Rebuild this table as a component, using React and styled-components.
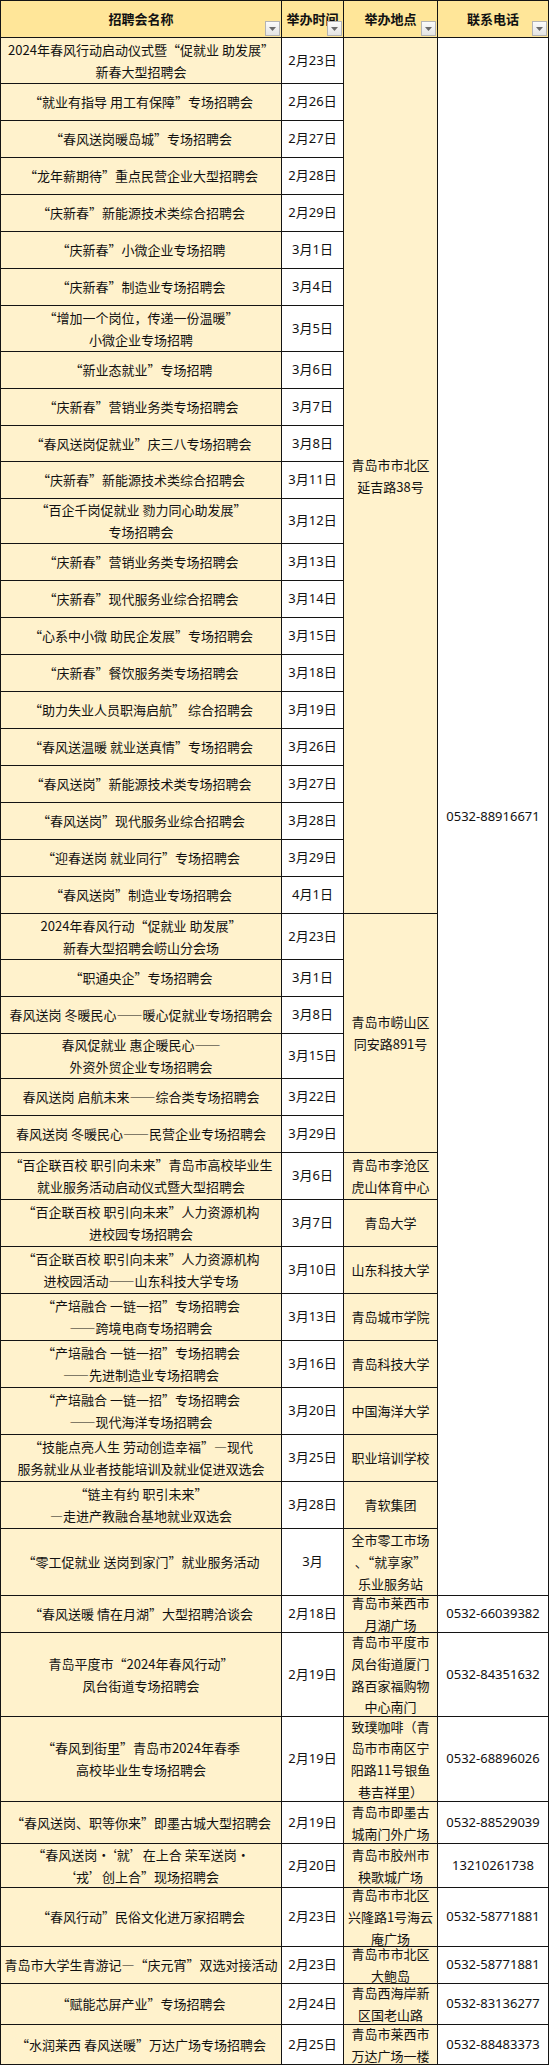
import React from "react";
import styled, { createGlobalStyle } from "styled-components";

const GlobalStyle = createGlobalStyle`
  html, body {
    margin: 0;
    padding: 0;
    background: #fff;
  }
  body {
    font-family: "Noto Sans CJK SC", "Microsoft YaHei", sans-serif;
  }
`;

const HEADER_HEIGHT = 36;

// name lines, date, row height (px between grid lines)
const ROWS = [
  { name: ["2024年春风行动启动仪式暨“促就业 助发展”", "新春大型招聘会"], date: "2月23日", h: 45 },
  { name: ["“就业有指导 用工有保障”专场招聘会"], date: "2月26日", h: 36 },
  { name: ["“春风送岗暖岛城”专场招聘会"], date: "2月27日", h: 36 },
  { name: ["“龙年薪期待”重点民营企业大型招聘会"], date: "2月28日", h: 36 },
  { name: ["“庆新春”新能源技术类综合招聘会"], date: "2月29日", h: 36 },
  { name: ["“庆新春”小微企业专场招聘"], date: "3月1日", h: 36 },
  { name: ["“庆新春”制造业专场招聘会"], date: "3月4日", h: 36 },
  { name: ["“增加一个岗位，传递一份温暖”", "小微企业专场招聘"], date: "3月5日", h: 45 },
  { name: ["“新业态就业”专场招聘"], date: "3月6日", h: 36 },
  { name: ["“庆新春”营销业务类专场招聘会"], date: "3月7日", h: 36 },
  { name: ["“春风送岗促就业”庆三八专场招聘会"], date: "3月8日", h: 35 },
  { name: ["“庆新春”新能源技术类综合招聘会"], date: "3月11日", h: 36 },
  { name: ["“百企千岗促就业 勠力同心助发展”", "专场招聘会"], date: "3月12日", h: 44 },
  { name: ["“庆新春”营销业务类专场招聘会"], date: "3月13日", h: 36 },
  { name: ["“庆新春”现代服务业综合招聘会"], date: "3月14日", h: 36 },
  { name: ["“心系中小微 助民企发展”专场招聘会"], date: "3月15日", h: 36 },
  { name: ["“庆新春”餐饮服务类专场招聘会"], date: "3月18日", h: 36 },
  { name: ["“助力失业人员职海启航” 综合招聘会"], date: "3月19日", h: 36 },
  { name: ["“春风送温暖 就业送真情”专场招聘会"], date: "3月26日", h: 36 },
  { name: ["“春风送岗”新能源技术类专场招聘会"], date: "3月27日", h: 36 },
  { name: ["“春风送岗”现代服务业综合招聘会"], date: "3月28日", h: 36 },
  { name: ["“迎春送岗 就业同行”专场招聘会"], date: "3月29日", h: 36 },
  { name: ["“春风送岗”制造业专场招聘会"], date: "4月1日", h: 36 },
  { name: ["2024年春风行动“促就业 助发展”", "新春大型招聘会崂山分会场"], date: "2月23日", h: 45 },
  { name: ["“职通央企”专场招聘会"], date: "3月1日", h: 36 },
  { name: ["春风送岗 冬暖民心——暖心促就业专场招聘会"], date: "3月8日", h: 36 },
  { name: ["春风促就业 惠企暖民心——", "外资外贸企业专场招聘会"], date: "3月15日", h: 44 },
  { name: ["春风送岗 启航未来——综合类专场招聘会"], date: "3月22日", h: 36 },
  { name: ["春风送岗 冬暖民心——民营企业专场招聘会"], date: "3月29日", h: 36 },
  { name: ["“百企联百校 职引向未来”青岛市高校毕业生", "就业服务活动启动仪式暨大型招聘会"], date: "3月6日", h: 46 },
  { name: ["“百企联百校 职引向未来”人力资源机构", "进校园专场招聘会"], date: "3月7日", h: 46 },
  { name: ["“百企联百校 职引向未来”人力资源机构", "进校园活动——山东科技大学专场"], date: "3月10日", h: 46 },
  { name: ["“产培融合 一链一招”专场招聘会", "——跨境电商专场招聘会"], date: "3月13日", h: 46 },
  { name: ["“产培融合 一链一招”专场招聘会", "——先进制造业专场招聘会"], date: "3月16日", h: 46 },
  { name: ["“产培融合 一链一招”专场招聘会", "——现代海洋专场招聘会"], date: "3月20日", h: 46 },
  { name: ["“技能点亮人生 劳动创造幸福”—现代", "服务就业从业者技能培训及就业促进双选会"], date: "3月25日", h: 46 },
  { name: ["“链主有约 职引未来”", "—走进产教融合基地就业双选会"], date: "3月28日", h: 46 },
  { name: ["“零工促就业 送岗到家门”就业服务活动"], date: "3月", h: 66 },
  { name: ["“春风送暖 情在月湖”大型招聘洽谈会"], date: "2月18日", h: 36 },
  { name: ["青岛平度市“2024年春风行动”", "凤台街道专场招聘会"], date: "2月19日", h: 83 },
  { name: ["“春风到街里”青岛市2024年春季", "高校毕业生专场招聘会"], date: "2月19日", h: 84 },
  { name: ["“春风送岗、职等你来”即墨古城大型招聘会"], date: "2月19日", h: 41 },
  { name: ["“春风送岗·‘就’在上合 荣军送岗·", "‘戎’创上合”现场招聘会"], date: "2月20日", h: 43 },
  { name: ["“春风行动”民俗文化进万家招聘会"], date: "2月23日", h: 58 },
  { name: ["青岛市大学生青游记—“庆元宵”双选对接活动"], date: "2月23日", h: 36 },
  { name: ["“赋能芯屏产业”专场招聘会"], date: "2月24日", h: 40 },
  { name: ["“水润莱西 春风送暖”万达广场专场招聘会"], date: "2月25日", h: 39 },
];

// merged location cells: first row (1-based), number of rows spanned
const PLACES = [
  { start: 1, span: 23, lines: ["青岛市市北区", "延吉路38号"] },
  { start: 24, span: 6, lines: ["青岛市崂山区", "同安路891号"] },
  { start: 30, span: 1, lines: ["青岛市李沧区", "虎山体育中心"] },
  { start: 31, span: 1, lines: ["青岛大学"] },
  { start: 32, span: 1, lines: ["山东科技大学"] },
  { start: 33, span: 1, lines: ["青岛城市学院"] },
  { start: 34, span: 1, lines: ["青岛科技大学"] },
  { start: 35, span: 1, lines: ["中国海洋大学"] },
  { start: 36, span: 1, lines: ["职业培训学校"] },
  { start: 37, span: 1, lines: ["青软集团"] },
  { start: 38, span: 1, lines: ["全市零工市场", "、“就享家”", "乐业服务站"] },
  { start: 39, span: 1, lines: ["青岛市莱西市", "月湖广场"] },
  { start: 40, span: 1, lines: ["青岛市平度市", "凤台街道厦门", "路百家福购物", "中心南门"] },
  { start: 41, span: 1, lines: ["致璞咖啡（青", "岛市市南区宁", "阳路11号银鱼", "巷吉祥里）"] },
  { start: 42, span: 1, lines: ["青岛市即墨古", "城南门外广场"] },
  { start: 43, span: 1, lines: ["青岛市胶州市", "秧歌城广场"] },
  { start: 44, span: 1, lines: ["青岛市市北区", "兴隆路1号海云", "庵广场"] },
  { start: 45, span: 1, lines: ["青岛市市北区", "大鲍岛"] },
  { start: 46, span: 1, lines: ["青岛西海岸新", "区国老山路"] },
  { start: 47, span: 1, lines: ["青岛市莱西市", "万达广场一楼"] },
];

const PHONES = [
  { start: 1, span: 38, text: "0532-88916671" },
  { start: 39, span: 1, text: "0532-66039382" },
  { start: 40, span: 1, text: "0532-84351632" },
  { start: 41, span: 1, text: "0532-68896026" },
  { start: 42, span: 1, text: "0532-88529039" },
  { start: 43, span: 1, text: "13210261738" },
  { start: 44, span: 1, text: "0532-58771881" },
  { start: 45, span: 1, text: "0532-58771881" },
  { start: 46, span: 1, text: "0532-83136277" },
  { start: 47, span: 1, text: "0532-88483373" },
];

const HEADERS = ["招聘会名称", "举办时间", "举办地点", "联系电话"];

const Sheet = styled.div`
  display: grid;
  grid-template-columns: 280px 61px 93px 110px;
  grid-template-rows: ${({ $rows }) => $rows.map((h) => `${h}px`).join(" ")};
  gap: 1px;
  padding: 1px;
  width: 549px;
  box-sizing: border-box;
  background: #141414;
  color: #111;
  font-size: 13px;
  line-height: 21.7px;
`;

const HeadCell = styled.div`
  position: relative;
  grid-row: 1;
  grid-column: ${({ $col }) => $col};
  display: flex;
  align-items: center;
  justify-content: center;
  background: #ffe699;
  font-weight: 700;
  font-size: 13px;
  white-space: nowrap;
  overflow: hidden;
`;

const FilterButton = styled.span`
  position: absolute;
  right: 1px;
  bottom: 1px;
  width: 15px;
  height: 15px;
  box-sizing: border-box;
  border: 1px solid #b4b4b4;
  background: linear-gradient(#fbfbfb, #e4e4e4);
  display: flex;
  align-items: center;
  justify-content: center;
`;

const Cell = styled.div`
  grid-column: ${({ $col }) => $col};
  grid-row: ${({ $row, $span }) => `${$row} / span ${$span || 1}`};
  display: flex;
  flex-direction: column;
  align-items: center;
  justify-content: center;
  text-align: center;
  overflow: hidden;
  background: ${({ $white }) => ($white ? "#ffffff" : "#fff2cc")};
  font-family: ${({ $latin }) =>
    $latin
      ? `"Noto Sans", "Noto Sans CJK SC", sans-serif`
      : `"Noto Sans CJK SC", "Microsoft YaHei", sans-serif`};
`;

const Line = styled.span`
  display: block;
  white-space: nowrap;
  flex-shrink: 0;
`;

function FilterArrow() {
  return (
    <FilterButton>
      <svg width="7" height="4" viewBox="0 0 7 4">
        <polygon points="0,0 7,0 3.5,4" fill="#6b6b6b" />
      </svg>
    </FilterButton>
  );
}

function Lines({ lines }) {
  return lines.map((t, i) => <Line key={i}>{t}</Line>);
}

export default function App() {
  const rowHeights = [HEADER_HEIGHT, ...ROWS.map((r) => r.h)];

  return (
    <>
      <GlobalStyle />
      <Sheet lang="zh-CN" $rows={rowHeights}>
        {HEADERS.map((h, i) => (
          <HeadCell key={h} $col={i + 1}>
            {h}
            <FilterArrow />
          </HeadCell>
        ))}

        {ROWS.map((r, i) => (
          <React.Fragment key={i}>
            <Cell $col={1} $row={i + 2}>
              <Lines lines={r.name} />
            </Cell>
            <Cell $col={2} $row={i + 2} $white $latin>
              <Line>{r.date}</Line>
            </Cell>
          </React.Fragment>
        ))}

        {PLACES.map((p) => (
          <Cell key={p.start} $col={3} $row={p.start + 1} $span={p.span}>
            <Lines lines={p.lines} />
          </Cell>
        ))}

        {PHONES.map((p) => (
          <Cell key={p.start} $col={4} $row={p.start + 1} $span={p.span} $white $latin>
            <Line>{p.text}</Line>
          </Cell>
        ))}
      </Sheet>
    </>
  );
}
